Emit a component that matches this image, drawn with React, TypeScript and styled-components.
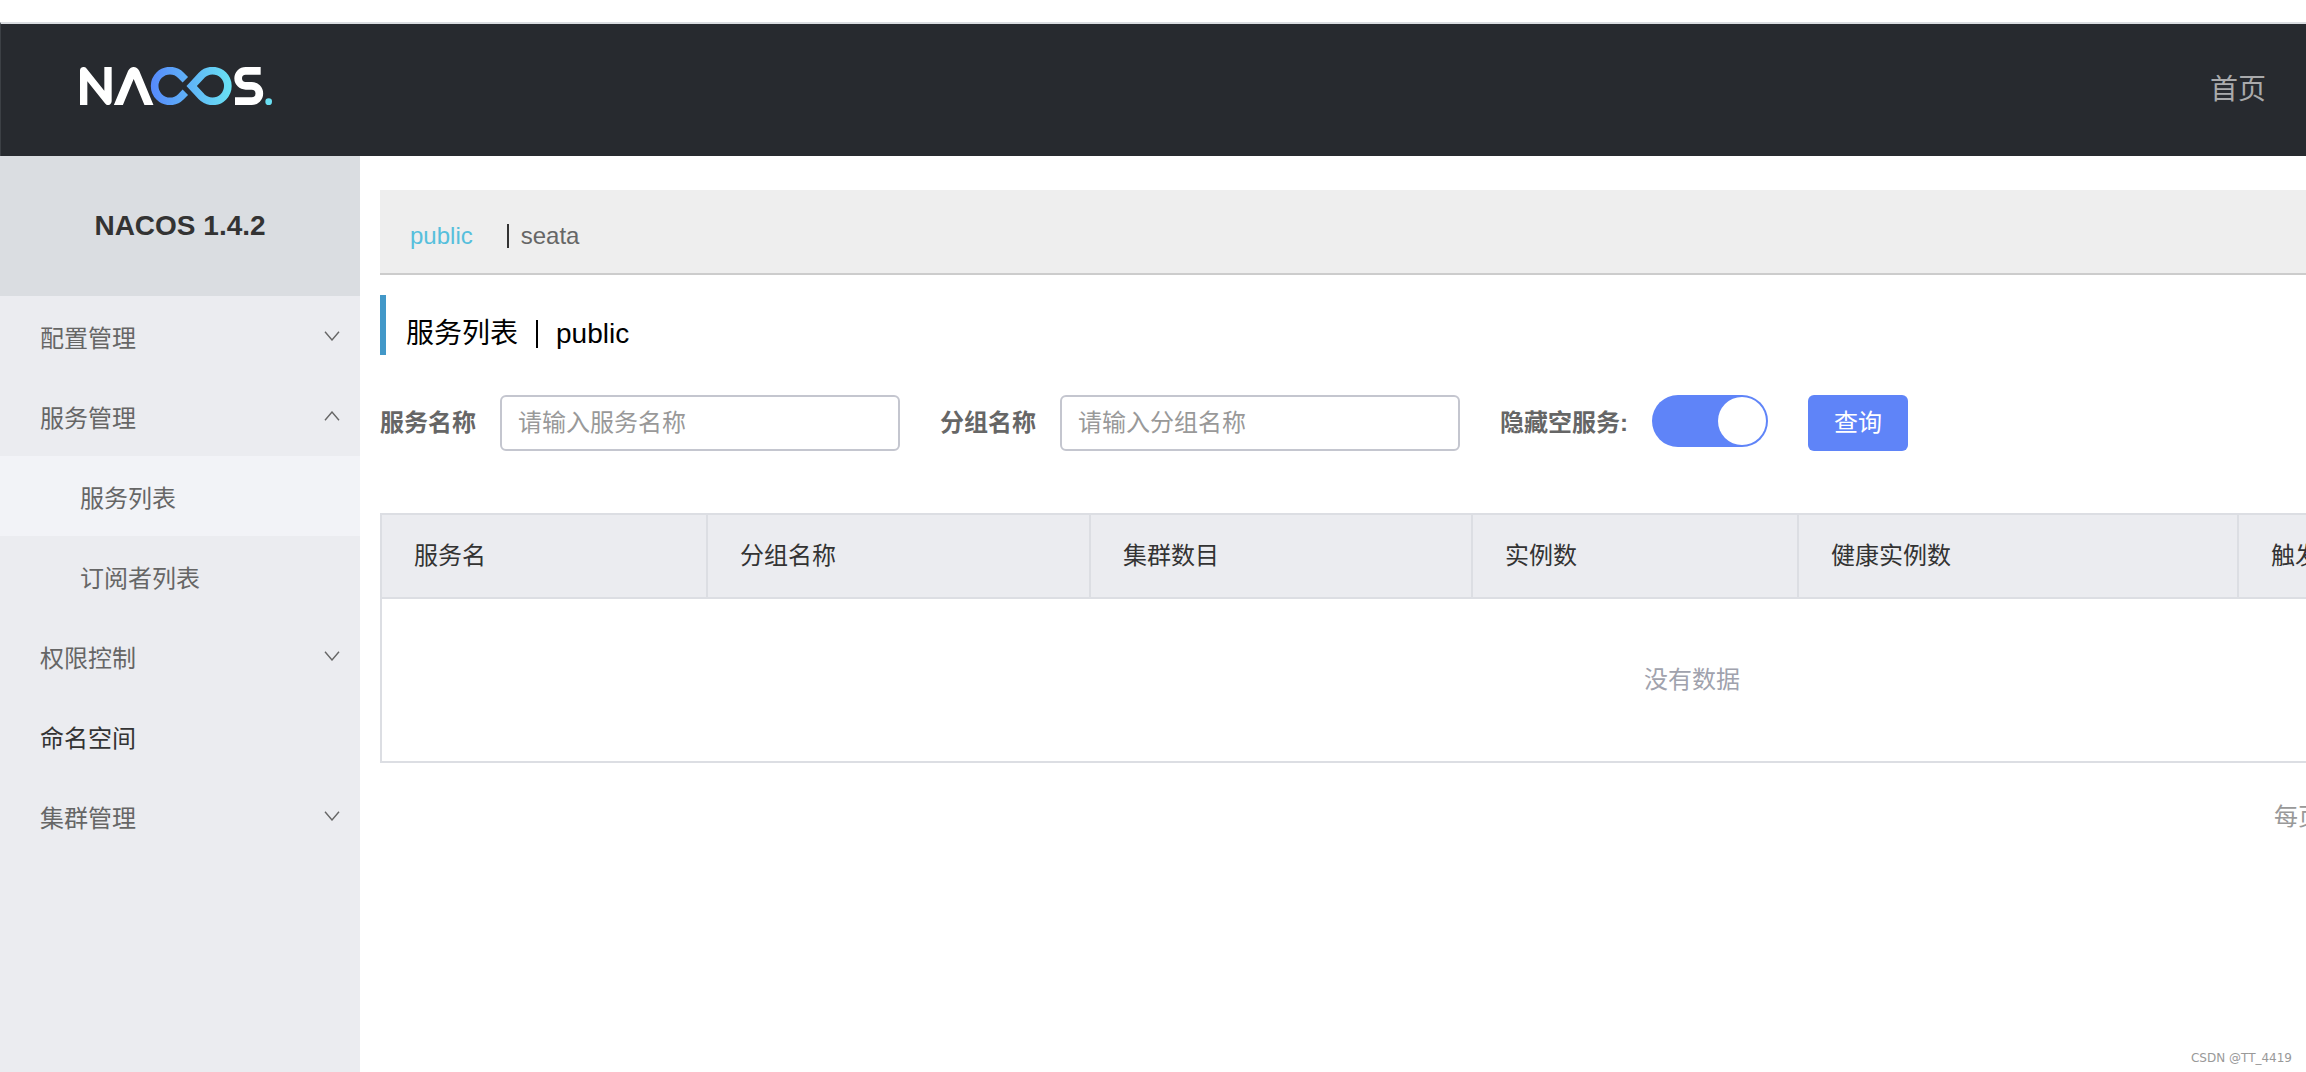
import React, { useState } from 'react';
import styled, { createGlobalStyle, css } from 'styled-components';

const GlobalStyle = createGlobalStyle`
  * { box-sizing: border-box; }
  body {
    margin: 0;
    background: #fff;
    color: #333;
    font-family: "Liberation Sans", "Noto Sans CJK SC", sans-serif;
    font-size: 24px;
    line-height: 36px;
  }
  button, input { font: inherit; }
  a { color: inherit; text-decoration: none; }
`;

const Page = styled.div`
  position: relative;
  display: flex;
  flex-direction: column;
  min-height: 100vh;
  padding-top: 22px;
  overflow: hidden;
`;

const Header = styled.header`
  display: flex;
  align-items: center;
  justify-content: space-between;
  height: 134px;
  padding: 0 40px 0 78px;
  border-top: 2px solid #dadde1;
  border-left: 1px solid #3c4045;
  background: #272a2f;
`;

const LogoLink = styled.a`
  display: block;
  padding-bottom: 8px;
  line-height: 0;
`;

const NavLink = styled.a`
  color: #a9aaac;
  font-size: 28px;
  line-height: 40px;
`;

const Body = styled.div`
  display: flex;
  flex: 1;
`;

const Sidebar = styled.nav`
  flex: none;
  width: 360px;
  background: #ebecf0;
`;

const SidebarTitle = styled.h1`
  margin: 0;
  background: #dadde1;
  font-size: 28px;
  font-weight: bold;
  line-height: 140px;
  text-align: center;
`;

const MenuList = styled.ul`
  margin: 0;
  padding: 0;
  list-style: none;
`;

const menuRow = css`
  display: flex;
  align-items: center;
  justify-content: space-between;
  width: 100%;
  height: 80px;
  padding: 0 20px 0 40px;
  border: 0;
  text-align: left;
  cursor: pointer;
`;

const MenuButton = styled.button`
  ${menuRow}
  background: none;
  color: #666;
`;

const MenuLink = styled.a<{ $nested?: boolean; $active?: boolean }>`
  ${menuRow}
  padding-left: ${(p) => (p.$nested ? 80 : 40)}px;
  background: ${(p) => (p.$active ? '#f2f3f7' : 'transparent')};
  color: ${(p) => (p.$nested ? '#666' : '#333')};
`;

const MenuText = styled.span`
  padding-top: 6px;
`;

const Main = styled.main`
  flex: 1;
  min-width: 0;
  padding: 34px 0 0 20px;
  overflow: hidden;
`;

const NamespaceBar = styled.div`
  display: flex;
  align-items: center;
  padding: 28px 30px 19px;
  border-bottom: 2px solid #ccc;
  background: #eee;
`;

const Namespace = styled.a<{ $active?: boolean }>`
  color: ${(p) => (p.$active ? '#56bfdc' : '#666')};
`;

const Divider = styled.span<{ $size: number; $before: number; $after: number }>`
  width: 2px;
  height: ${(p) => p.$size}px;
  margin: 0 ${(p) => p.$after}px 0 ${(p) => p.$before}px;
  background: currentColor;
`;

const PageTitle = styled.h2`
  display: flex;
  align-items: center;
  height: 60px;
  margin: 20px 0 40px;
  padding: 18px 0 0 20px;
  border-left: 6px solid #4298c8;
  color: #000;
  font-size: 28px;
  font-weight: normal;
  line-height: 40px;
`;

const SearchForm = styled.form`
  display: flex;
  align-items: flex-start;
  gap: 40px;
  margin-bottom: 62px;
`;

const Field = styled.div`
  display: flex;
  gap: 24px;
`;

const Label = styled.label`
  color: #666;
  font-weight: bold;
  line-height: 56px;
  white-space: nowrap;
`;

const TextInput = styled.input`
  width: 400px;
  height: 56px;
  padding: 0 16px;
  border: 2px solid #c4c6cf;
  border-radius: 6px;
  background: #fff;
  color: #333;
  &::placeholder { color: #999; opacity: 1; }
`;

const Switch = styled.input`
  display: flex;
  appearance: none;
  width: 116px;
  height: 52px;
  margin: 0;
  padding: 2px;
  border-radius: 26px;
  background: #c4c6cf;
  cursor: pointer;
  &::before {
    content: "";
    width: 48px;
    height: 48px;
    border-radius: 50%;
    background: #fff;
  }
  &:checked {
    justify-content: flex-end;
    background: #5f84f8;
  }
`;

const SearchButton = styled.button`
  width: 100px;
  height: 56px;
  padding: 0;
  border: 0;
  border-radius: 6px;
  background: #5f84f8;
  color: #fff;
  cursor: pointer;
`;

const Table = styled.table`
  width: 2624px;
  border: 2px solid #dcdee3;
  border-spacing: 0;
  table-layout: fixed;
`;

const HeadCell = styled.th<{ $width?: number }>`
  width: ${(p) => (p.$width ? `${p.$width}px` : 'auto')};
  height: 84px;
  padding: 0 32px;
  border-bottom: 2px solid #dcdee3;
  background: #ebecf0;
  font-weight: normal;
  text-align: left;
  & + & { border-left: 2px solid #dcdee3; }
`;

const EmptyCell = styled.td`
  height: 162px;
  padding: 0;
  color: #a0a2ad;
  text-align: center;
`;

const Pagination = styled.div`
  display: flex;
  justify-content: flex-end;
  width: 2624px;
  margin-top: 36px;
  color: #999;
`;

const PageSize = styled.span`
  width: 730px;
`;

const Watermark = styled.span`
  position: absolute;
  right: 14px;
  bottom: 4px;
  color: #999;
  font-family: "DejaVu Sans", sans-serif;
  font-size: 12px;
  line-height: 20px;
`;

const Logo = () => (
  <svg width="194" height="40" viewBox="57 48 582 120" fill="none" aria-label="NACOS" role="img">
    <defs>
      <linearGradient id="loop" gradientUnits="userSpaceOnUse" x1="273" y1="0" x2="514" y2="0">
        <stop offset="0" stopColor="#5689fb" />
        <stop offset="1" stopColor="#69e2f3" />
      </linearGradient>
      <clipPath id="band">
        <rect x="57" y="51" width="582" height="114" />
      </clipPath>
    </defs>
    <g clipPath="url(#band)" strokeWidth="22" strokeLinejoin="round">
      <path stroke="#fff" d="M71 170V62L144 154V45" />
      <path stroke="#fff" strokeWidth="25" d="M171 175L215 69Q221 58 227 69L271 175" />
      <path stroke="#fff" strokeWidth="23" d="M602 62.500H557A22.500 22.500 0 0 0 557 107.500H575A23 23 0 0 1 575 153.500H525" />
      <path stroke="url(#loop)" strokeWidth="23" d="M376 89L362.500 75.500A46 46 0 1 0 362.500 140.500L376 127" />
      <path
        stroke="url(#loop)"
        strokeWidth="23"
        strokeLinejoin="miter"
        d="M395 108L424.500 76A46 46 0 1 1 424.500 140Z"
      />
    </g>
    <circle cx="626" cy="155" r="10" fill="#6adff3" />
  </svg>
);

const Chevron = ({ up }: { up?: boolean }) => (
  <svg width="16" height="10" viewBox="0 0 16 10" fill="none" stroke="#666" strokeWidth="1.4">
    <path d={up ? 'M1 9.300L8 1L15 9.300' : 'M1 0.700L8 9L15 0.700'} />
  </svg>
);

type MenuEntry = { name: string; leaf?: boolean; children?: string[] };

const menu: MenuEntry[] = [
  { name: '配置管理' },
  { name: '服务管理', children: ['服务列表', '订阅者列表'] },
  { name: '权限控制' },
  { name: '命名空间', leaf: true },
  { name: '集群管理' },
];

const columns = [
  { name: '服务名', width: 324 },
  { name: '分组名称', width: 383 },
  { name: '集群数目', width: 382 },
  { name: '实例数', width: 326 },
  { name: '健康实例数', width: 440 },
  { name: '触发保护阈值' },
];

export default function App() {
  const [hideEmpty, setHideEmpty] = useState(true);
  return (
    <Page>
      <GlobalStyle />
      <Header>
        <LogoLink href="#"><Logo /></LogoLink>
        <NavLink href="#">首页</NavLink>
      </Header>
      <Body>
        <Sidebar>
          <SidebarTitle>NACOS 1.4.2</SidebarTitle>
          <MenuList>
            {menu.map((item) => (
              <li key={item.name}>
                {item.leaf ? (
                  <MenuLink href="#"><MenuText>{item.name}</MenuText></MenuLink>
                ) : (
                  <MenuButton type="button" aria-expanded={!!item.children}>
                    <MenuText>{item.name}</MenuText>
                    <Chevron up={!!item.children} />
                  </MenuButton>
                )}
                {item.children && (
                  <MenuList>
                    {item.children.map((child, i) => (
                      <li key={child}>
                        <MenuLink href="#" $nested $active={i === 0}>
                          <MenuText>{child}</MenuText>
                        </MenuLink>
                      </li>
                    ))}
                  </MenuList>
                )}
              </li>
            ))}
          </MenuList>
        </Sidebar>
        <Main>
          <NamespaceBar>
            <Namespace href="#" $active>public</Namespace>
            <Divider $size={24} $before={34} $after={12} />
            <Namespace href="#">seata</Namespace>
          </NamespaceBar>
          <PageTitle>
            服务列表
            <Divider $size={28} $before={18} $after={18} />
            public
          </PageTitle>
          <SearchForm onSubmit={(e) => e.preventDefault()}>
            <Field>
              <Label htmlFor="service">服务名称</Label>
              <TextInput id="service" placeholder="请输入服务名称" />
            </Field>
            <Field>
              <Label htmlFor="group">分组名称</Label>
              <TextInput id="group" placeholder="请输入分组名称" />
            </Field>
            <Field>
              <Label htmlFor="hide-empty">隐藏空服务:</Label>
              <Switch
                id="hide-empty"
                type="checkbox"
                checked={hideEmpty}
                onChange={(e) => setHideEmpty(e.target.checked)}
              />
            </Field>
            <SearchButton type="submit">查询</SearchButton>
          </SearchForm>
          <Table>
            <thead>
              <tr>
                {columns.map((c) => (
                  <HeadCell key={c.name} $width={c.width}>{c.name}</HeadCell>
                ))}
              </tr>
            </thead>
            <tbody>
              <tr>
                <EmptyCell colSpan={columns.length}>没有数据</EmptyCell>
              </tr>
            </tbody>
          </Table>
          <Pagination>
            <PageSize>每页显示</PageSize>
          </Pagination>
        </Main>
      </Body>
      <Watermark>CSDN @TT_4419</Watermark>
    </Page>
  );
}
